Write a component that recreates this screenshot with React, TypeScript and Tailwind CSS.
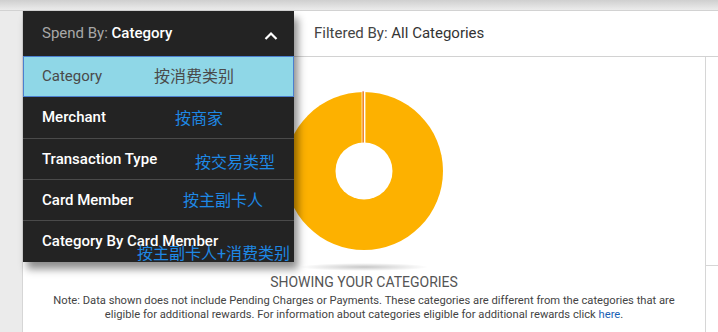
import React from "react"

const options = [
  { label: "Merchant", zh: "按商家", x: "left-[152px]", y: "top-[98px]" },
  { label: "Transaction Type", zh: "按交易类型", x: "left-[172px]", y: "top-[142px]" },
  { label: "Card Member", zh: "按主副卡人", x: "left-[160px]", y: "top-[180px]" },
  { label: "Category By Card Member", zh: "按主副卡人+消费类别", x: "left-[114px]", y: "top-[233px]" },
]

function Donut() {
  return (
    <svg width="160" height="160" viewBox="-80 -80 160 160">
      <circle cx="0" cy="0" r="79" fill="#fdb100" />
      <line x1="0.6" y1="-28" x2="0.6" y2="-80" stroke="#ffffff" strokeWidth="1.6" />
      <line x1="-1" y1="-28" x2="-1" y2="-80" stroke="#e8501e" strokeWidth="1" />
      <line x1="-2" y1="-28" x2="-2" y2="-80" stroke="#ffffff" strokeWidth="0.7" />
      <circle cx="0" cy="0" r="28.5" fill="#ffffff" />
    </svg>
  )
}

function SpendDropdown() {
  return (
    <div className="absolute left-0 top-0 w-[271px] h-[251px] overflow-hidden bg-[#232323] shadow-[4px_7px_8px_rgba(0,0,0,0.45)] z-10">
      <div className="h-[45px] flex items-center justify-between pl-[19px] pr-[16px] text-[15px]">
        <span>
          <span className="text-[#a8a8a8]">Spend By: </span>
          <span className="text-white font-medium">Category</span>
        </span>
        <svg width="14" height="10" viewBox="0 0 14 10" className="mt-[4px]">
          <path d="M1.5 8 L7 2.5 L12.5 8" fill="none" stroke="#ffffff" strokeWidth="2.2" />
        </svg>
      </div>
      <div className="h-[41px] flex items-center pl-[18px] bg-[#8fd7e7] border border-[#4b7fcf] text-[#4a4a4a] text-[15px]">
        Category
      </div>
      {options.map((o, i) => (
        <div
          key={o.label}
          className={`h-[41px] flex items-center pl-[19px] text-white font-medium text-[15px] ${i > 0 ? "border-t border-[#4a4a4a]" : ""}`}
        >
          {o.label}
        </div>
      ))}
      <span className="absolute left-[131px] top-[56px] text-[16px] text-[#4a4a4a] leading-[20px]">按消费类别</span>
      {options.map((o) => (
        <span key={o.zh} className={`absolute ${o.x} ${o.y} text-[16px] text-[#1e88e5] leading-[20px]`}>
          {o.zh}
        </span>
      ))}
    </div>
  )
}

export default function App() {
  return (
    <div
      className="w-[718px] h-[332px] overflow-hidden bg-[#ebebeb] flex flex-col"
      style={{ fontFamily: "Roboto, 'Noto Sans CJK SC', sans-serif" }}
    >
      <div className="h-[11px] shrink-0 bg-gradient-to-b from-[#cfcfcf] to-[#ececec] border-b border-[#d2d2d2]" />
      <div className="flex flex-1">
        <div className="w-[22px] shrink-0 bg-[#ebebeb]" />
        <div className="relative flex-1 flex flex-col bg-white border-l border-[#d6d6d6]">
          <SpendDropdown />
          <div className="h-[46px] shrink-0 flex items-center border-b border-[#d2d2d2]">
            <div className="w-[271px] shrink-0" />
            <span className="pl-[20px] text-[15px] text-[#444]">
              Filtered By: <span className="text-[#333]">All Categories</span>
            </span>
          </div>
          <div className="flex flex-1">
            <div className="flex-1 flex flex-col items-center border-r border-[#d6d6d6]">
              <div className="mt-[34px]">
                <Donut />
              </div>
              <div className="w-[130px] h-[8px] mt-[12px] rounded-[50%] bg-[radial-gradient(ellipse_at_center,rgba(0,0,0,0.22),rgba(0,0,0,0)_70%)]" />
              <div className="mt-[1px] text-[14px] text-[#555] uppercase">Showing your categories</div>
              <p className="mt-[1px] px-[18px] text-center text-[11.2px] leading-[14px] text-[#444]">
                Note: Data shown does not include Pending Charges or Payments. These categories are different from the categories that are eligible for additional rewards. For information about categories eligible for additional rewards click{" "}
                <span className="text-[#1a5fb4]">here</span>.
              </p>
            </div>
            <div className="w-[12px] shrink-0 flex flex-col">
              <div className="h-[209px] border-b border-[#d6d6d6]" />
            </div>
          </div>
        </div>
      </div>
    </div>
  )
}
